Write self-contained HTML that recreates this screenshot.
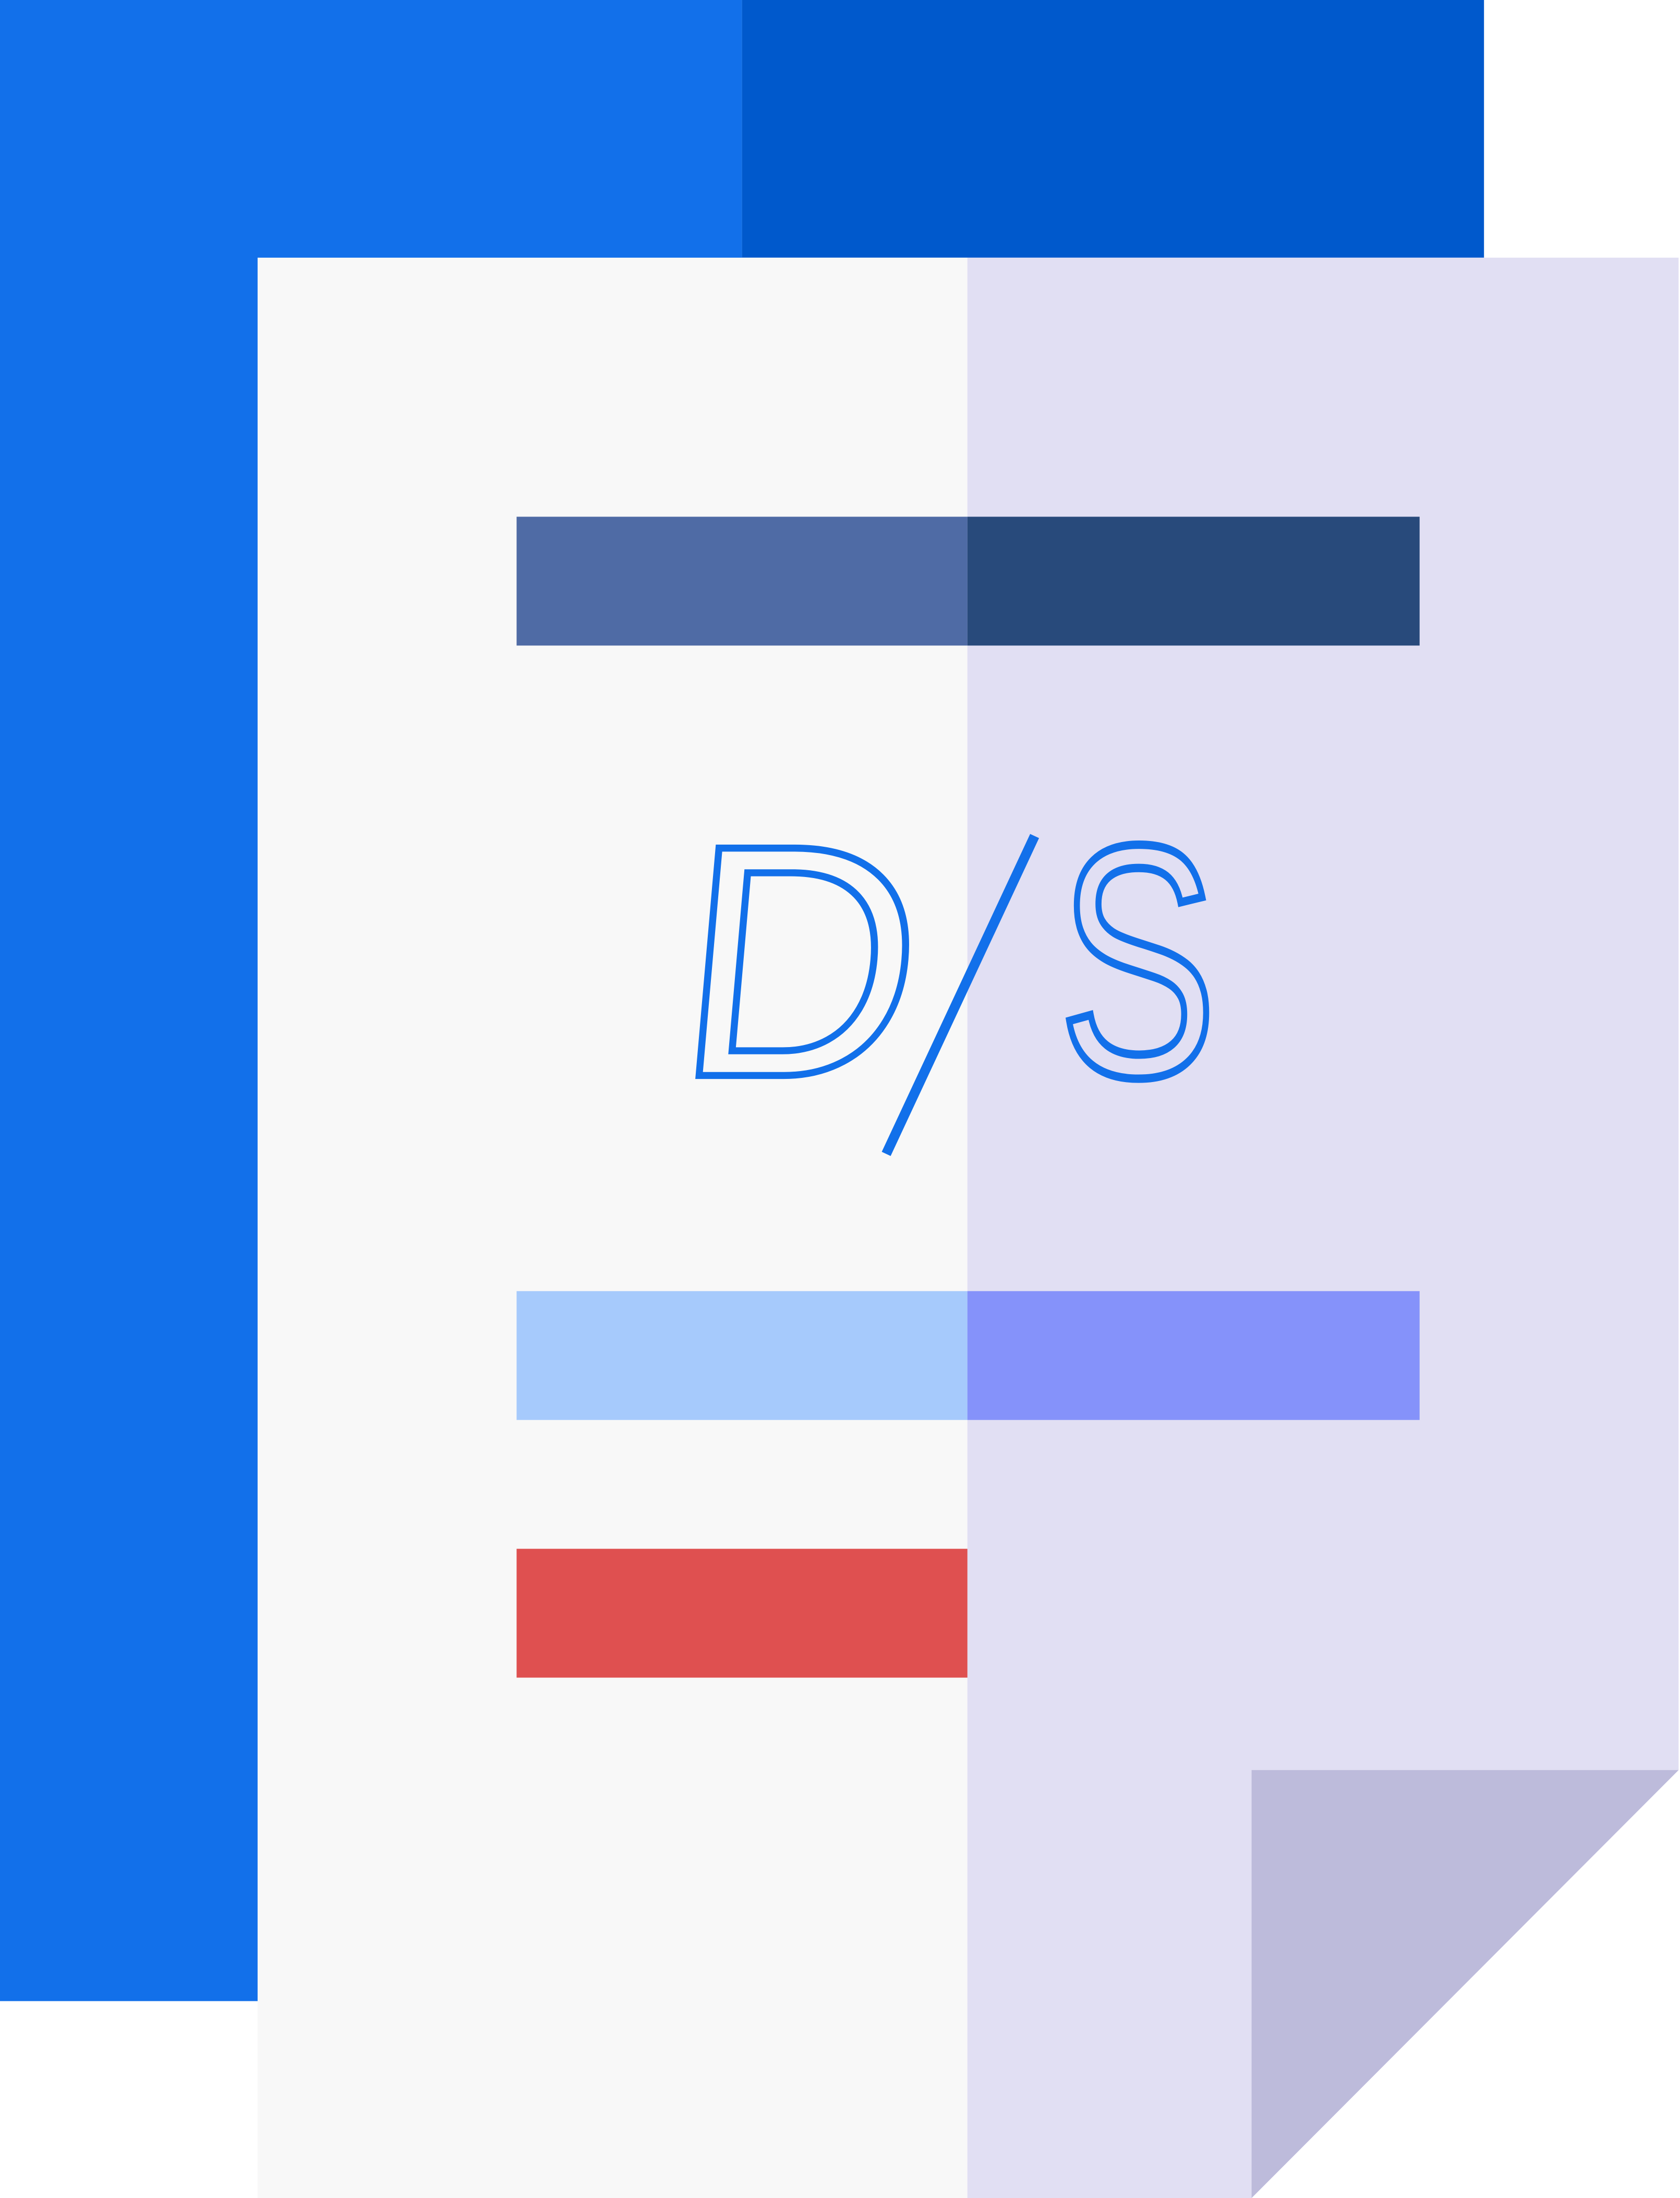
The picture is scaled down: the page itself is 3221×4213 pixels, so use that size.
<!DOCTYPE html>
<html><head><meta charset="utf-8"><style>html,body{margin:0;padding:0;background:#fff;}svg{display:block}</style></head>
<body>
<svg width="3221" height="4213" viewBox="0 0 1200 1569.6" preserveAspectRatio="none" xmlns="http://www.w3.org/2000/svg">
<rect x="0" y="0" width="1200" height="1569.6" fill="#fff"/>
<rect x="0" y="0" width="530" height="1429" fill="#1270EA"/>
<rect x="530" y="0" width="530" height="184" fill="#0059CC"/>
<rect x="184" y="184" width="507" height="1386" fill="#F8F8F8"/>
<polygon points="691,184 1199,184 1199,1264 894,1569.6 691,1569.6" fill="#E1DFF3"/>
<polygon points="894,1264 1199,1264 894,1569.6" fill="#BDBBDB"/>
<rect x="369" y="369" width="322" height="92" fill="#4F6BA5"/>
<rect x="691" y="369" width="323" height="92" fill="#284A7B"/>
<rect x="369" y="922" width="322" height="92" fill="#A6CAFC"/>
<rect x="691" y="922" width="323" height="92" fill="#8592FA"/>
<rect x="369" y="1106" width="322" height="92" fill="#DF5050"/>
<g transform="translate(480,768) skewX(-5)">
<text x="0" y="0" font-family="Liberation Sans, sans-serif" font-size="236" fill="none" stroke="#1270EA" stroke-width="5">D</text>
</g>
<line x1="739" y1="597" x2="633" y2="824" stroke="#1270EA" stroke-width="7"/>
<g transform="translate(756,768) scale(0.72,1)">
<text x="0" y="0" font-family="Liberation Sans, sans-serif" font-size="236" fill="none" stroke="#1270EA" stroke-width="6">S</text>
</g>
</svg>
</body></html>
